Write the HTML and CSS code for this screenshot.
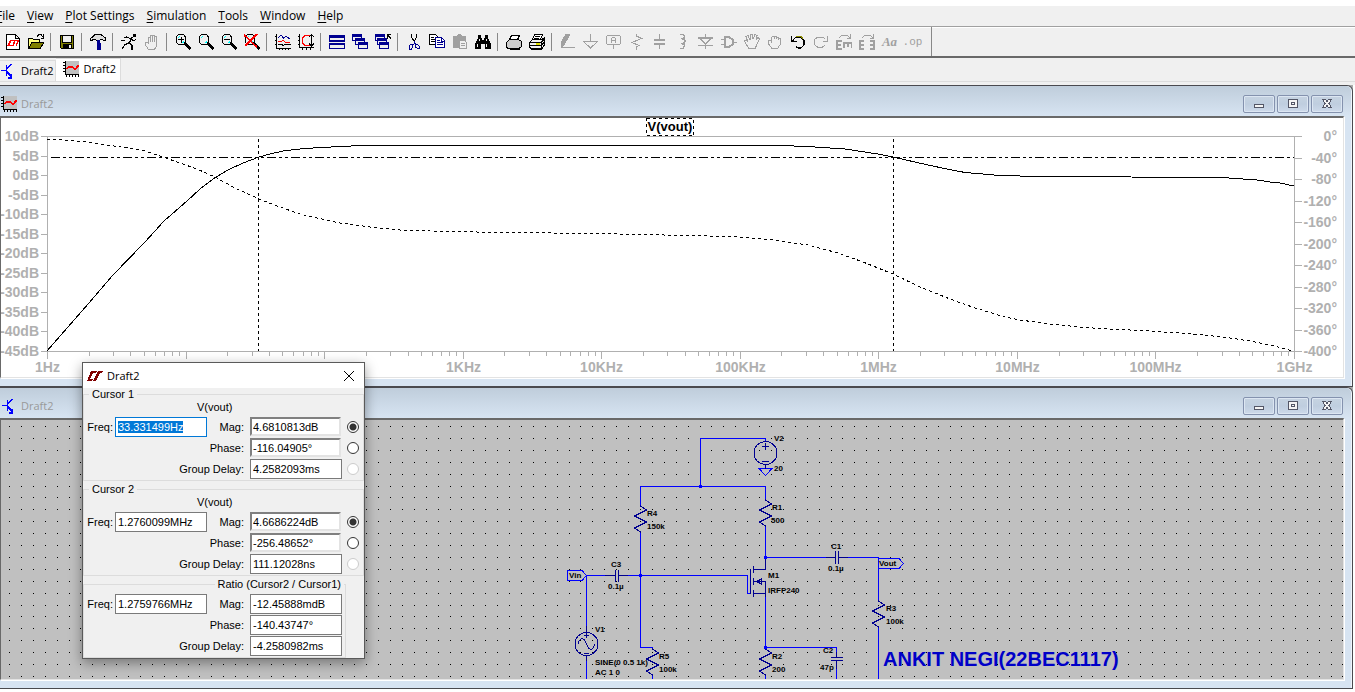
FILE: index.html
```html
<!DOCTYPE html>
<html lang="en">
<head>
<meta charset="utf-8">
<title>Draft2</title>
<link rel="stylesheet" href="styles.css">
</head>
<body>
<svg class="defs" aria-hidden="true">
  <symbol id="i-plot" viewBox="0 0 16 16">
    <rect x="2" width="14" height="13" fill="#c0c0c0"/>
    <path d="M2.500 0v13.500H16M0 1.500h2M0 4.500h2M0 7.500h2M0 10.500h2M3.500 14v2M6.500 14v2M9.500 14v2M12.500 14v2M15.500 14v2" fill="none" stroke="#000"/>
    <path d="M3.500 8L6 5.500H9L11 7.500H13L16 4" fill="none" stroke="#f00" stroke-width="2"/>
  </symbol>
  <symbol id="i-npn" viewBox="0 0 16 16">
    <path d="M1 7.500h5M6.500 2v11M7 6L11.500 1M7 9l5 5M11.500 11v4H8" fill="none" stroke="#00f" stroke-width="1.500"/>
  </symbol>
  <symbol id="resistor" viewBox="-8 0 16 28" overflow="visible">
    <path d="M0 0v1l6 4-12 6 12 6-12 6 6 4v1"/>
  </symbol>
</svg>

<header class="app-head">
  <nav class="menu" aria-label="Main menu">
    <button><u>F</u>ile</button><button><u>V</u>iew</button><button><u>P</u>lot Settings</button><button><u>S</u>imulation</button><button><u>T</u>ools</button><button><u>W</u>indow</button><button><u>H</u>elp</button>
  </nav>
  <div class="toolbar" role="toolbar" aria-label="Tools">
    <button aria-label="New schematic"><svg viewBox="0 0 16 16"><path d="M1.500 .5h9l4 4v11h-13zM10.500 .5v4h4" fill="#fff" stroke="#000"/><path d="M3 11.500L6 6.500h4L8 11.500zM9 6.500h4.500L11 11.500" fill="none" stroke="#f00" stroke-width="1.600"/></svg></button>
    <button aria-label="Open"><svg viewBox="0 0 16 16"><path d="M.5 14V4.500h4l1 1h6V8" fill="#ffff80" stroke="#000"/><path d="M.5 14.500L4 8.500h12L12 14.500z" fill="#808000" stroke="#000"/><path d="M9 2.500L11 .5h2l2 2.500M15.500 0v4h-3" fill="none" stroke="#000"/></svg></button>
    <span class="sep"></span>
    <button aria-label="Save"><svg viewBox="0 0 16 16"><path d="M1.500 1.500h13v13H2.500l-1-1z" fill="#808000" stroke="#000"/><path d="M4 2h8v6H4z" fill="#efefef"/><path d="M3.500 2v6.500h9V2" fill="none" stroke="#000"/><path d="M4 10h9v5H4z" fill="#000"/><path d="M10 11h2v3h-2z" fill="#efefef"/></svg></button>
    <span class="sep"></span>
    <button aria-label="Control panel"><svg viewBox="0 0 16 16"><path d="M.5 6.500v-2L3 2.500 5 .5h6L15.500 4v2.500h-2L12 5l-2 1H6L4 5 2 6.500z" fill="#ddd" stroke="#000"/><path d="M7 6h3v3h1v7H7V9h0z" fill="#000090"/></svg></button>
    <span class="sep"></span>
    <button aria-label="Run"><svg viewBox="0 0 16 16"><path d="M12 0h3v3h-3z" fill="#000"/><path d="M11.500 3L8 9M3 3.500l3-.5 4 2 3 2 2-2M8 9L4 10.500 1 15M8 9l3 2v4.500M0 6.500h4" fill="none" stroke="#000" stroke-width="1.300"/></svg></button>
    <button aria-label="Halt"><svg viewBox="0 0 16 16"><path d="M4.500 15.500L1.500 11V8h2l1 1V3.500h2V8 1.500h2V8 1h2v7-5.500h2V12l-2 3.500z" fill="#efefef" stroke="#a0a0a0"/></svg></button>
    <span class="sep"></span>
    <button aria-label="Zoom in"><svg viewBox="0 0 16 16"><use href="#lens"/><path d="M3 5.500h6M6.500 3v6" stroke="#000"/></svg></button>
    <button aria-label="Pan"><svg viewBox="0 0 16 16"><g id="lens"><path d="M3.500 .5h5l2 2.500v5l-2 2.500h-5L1 8V3z" fill="#efefef" stroke="#000"/><path d="M2.500 4.500L4.500 2.500M7.500 9L9 7.500" stroke="#0ff"/><path d="M10 9.500l5.500 5.500" stroke="#000" stroke-width="2.200"/></g></svg></button>
    <button aria-label="Zoom out"><svg viewBox="0 0 16 16"><use href="#lens"/><path d="M3 5.500h6" stroke="#000"/></svg></button>
    <button aria-label="Zoom to fit"><svg viewBox="0 0 16 16"><use href="#lens"/><path d="M0 1l13 12M13 0L1 12" stroke="#f00" stroke-width="1.600"/></svg></button>
    <span class="sep"></span>
    <button aria-label="Autorange"><svg viewBox="0 0 16 16"><path d="M1.500 0v14.500H16M0 2.500h2M0 6.500h2M0 10.500h2M4.500 14v2M7.500 14v2M10.500 14v2M13.500 14v2M3 10.500h4l1 1 2-1h6" fill="none" stroke="#000"/><path d="M3 4l3-3 2.500 3L11 2l4 3" fill="none" stroke="#000090"/><path d="M3 7.500h3l2-1 3 2h4" fill="none" stroke="#f00"/></svg></button>
    <button aria-label="Plot limits"><svg viewBox="0 0 16 16"><path d="M1.500 0v13.500H16M0 2.500h2M0 6.500h2M0 10.500h2M4.500 13v3M8.500 13v3M12.500 13v3M11 3l2.500-2.500L16 3M13.500 1v11M11 9.500l2.500 2.500L16 9.500" fill="none" stroke="#000"/><path d="M12 1.500H7L4.500 4v5L7 11.500h5" fill="none" stroke="#f00"/></svg></button>
    <span class="sep"></span>
    <button aria-label="Tile"><svg viewBox="0 0 16 16"><path d="M.5 1.500h15v5H.5zM.5 9.500h15v5H.5z" fill="#efefef" stroke="#000090"/><path d="M0 1h16v3H0zM0 9h16v2H0zM0 7h16v1H0z" fill="#000090"/></svg></button>
    <button aria-label="Cascade"><svg viewBox="0 0 16 16"><g id="win"><path d="M.5 1.500h9v5h-9z" fill="#efefef" stroke="#000090"/><path d="M0 0h10v3H0z" fill="#000090"/></g><use href="#win" x="3" y="4"/><use href="#win" x="6" y="8"/></svg></button>
    <button aria-label="Close all"><svg viewBox="0 0 16 16"><use href="#win"/><use href="#win" x="2" y="4"/><use href="#win" x="4" y="8"/><path d="M12.500 5V.5H16M12.500 1L16 4.500" stroke="#000" fill="none"/></svg></button>
    <span class="sep"></span>
    <button aria-label="Cut"><svg viewBox="0 0 16 16"><path d="M5.500 0v3l3 5M10.500 0v3L8 8" fill="none" stroke="#000" stroke-width="1.200"/><path d="M8 7v3l-2 1M8 9l2 1.500M3.500 11.500l1-1h2v3l-1 1.500h-2zM9.500 10.500h2l1.500 1.500v2h-2l-1.500-1z" fill="none" stroke="#000090"/></svg></button>
    <button aria-label="Copy"><svg viewBox="0 0 16 16"><path d="M.5 .5h6l2 2v8h-8z" fill="#fff" stroke="#000"/><path d="M2 3.500h3M2 5.500h5M2 7.500h5" stroke="#000"/><path d="M6.500 3.500h6l3 3v7h-9z" fill="#fff" stroke="#000090"/><path d="M8 6.500h3M8 8.500h6M8 10.500h6M12.500 4v3h3" stroke="#000090" fill="none"/></svg></button>
    <button aria-label="Paste"><svg viewBox="0 0 16 16"><path d="M1 2h4l1-2h3l1 2h4v12H1z" fill="#a0a0a0"/><path d="M7.500 6.500h5l2 2v6h-7z" fill="#efefef" stroke="#a0a0a0"/><path d="M9 9.500h4M9 11.500h4M4 3.500h7" stroke="#a0a0a0"/></svg></button>
    <button aria-label="Find"><svg viewBox="0 0 16 16"><path d="M3 1h3v3h1v2h2V4h1V1h3v3l3 6v5h-6v-5H6v5H0v-5l3-6z" fill="#000"/><path d="M2.500 10v3M4.500 5v2M11.500 5v2M11.500 10v3" stroke="#efefef"/></svg></button>
    <span class="sep"></span>
    <button aria-label="Print setup"><svg viewBox="0 0 16 16"><path d="M3.500 5.500l2-4h8l-2 4" fill="#fff" stroke="#000"/><path d="M.5 8.500l3-3h9l3 2v5l-2 1.500h-12l-1-1z" fill="#ccc" stroke="#000"/><path d="M4 14h10v2H4z" fill="#000"/></svg></button>
    <button aria-label="Print"><svg viewBox="0 0 16 16"><path d="M3.500 5.500l2-5h8l-2 5" fill="#fff" stroke="#000"/><path d="M6 2.500h5M5 4.500h5M.5 8.500l3-3h9l3-1.500v7l-3 4h-10l-2-2zM1 8.500h11l3-3M1 11.500h11l3-3M12.500 9v6" fill="#efefef" stroke="#000" stroke-width="1.300"/><path d="M7 10h4" stroke="#dd0" stroke-width="2"/></svg></button>
    <span class="sep"></span>
    <button aria-label="Wire"><svg viewBox="0 0 16 16" class="off"><path d="M6 0h3v2L4 11l-3 3V9z" fill="#a0a0a0"/><path d="M1 13.500h14"/></svg></button>
    <button aria-label="Ground"><svg viewBox="0 0 16 16" class="off"><path d="M7.500 0v7M0 7.500h15M1 8l6.500 6L14 8"/></svg></button>
    <button aria-label="Label net"><svg viewBox="0 0 16 16" class="off"><path d="M1.500 1.500h12l1 1v7l-1 1h-12l-1-1v-7zM7.500 11v4M5.500 9V5l1-1.500h2l1 1.500v4M5 6.500h5"/></svg></button>
    <button aria-label="Resistor"><svg viewBox="0 0 16 16" class="off"><path d="M7.500 0v2L12.500 4.500 3 8.500l7 3-2.500 1.500v3"/></svg></button>
    <button aria-label="Capacitor"><svg viewBox="0 0 16 16" class="off"><path d="M7.500 0v6M7.500 10v5"/><path d="M2 6h11M2 10h11" stroke-width="2"/></svg></button>
    <button aria-label="Inductor"><svg viewBox="0 0 16 16" class="off"><path d="M5 .5h3l1.500 2L8 4.500H6M7 5h2l1 2-1.500 2.500H6M7 10h2l.5 2L8 14.500H5" stroke-width="1.500"/></svg></button>
    <button aria-label="Diode"><svg viewBox="0 0 16 16" class="off"><path d="M7.500 0v4M0 4h15M2.500 5l5 5 5-5M0 11.500h15M7.500 11v4" stroke-width="1.500"/></svg></button>
    <button aria-label="Component"><svg viewBox="0 0 16 16" class="off"><path d="M0 5.500h4M0 10.500h4M12 8h4"/><path d="M4 3h4l4 3v4l-4 3H4z" stroke-width="2"/></svg></button>
    <button aria-label="Move"><svg viewBox="0 0 16 16" class="off"><path d="M5 14.500L1.500 9.500l-1-3 2-.5L4 8 2 2.500l2-1L6 6V.5h2L9 5l2-4.500 2 1L12 6l2-2.500 1.500 1.500-2.500 5-2 5z"/></svg></button>
    <button aria-label="Drag"><svg viewBox="0 0 16 16" class="off"><path d="M5 14.500L1.500 10V6.500h2L4.500 8V3.500l1-1h1.500V5 2.500h2V5l.5-2h2V6l.5-1.500h1.500V10l-3 4.500z"/></svg></button>
    <button aria-label="Undo"><svg viewBox="0 0 16 16"><path d="M3 6l3-3h4l4 3v5l-3 3H8l-2-1.500" fill="none" stroke="#000" stroke-width="1.200"/><path d="M1.500 2v5.500h5M2 6l2 1" fill="none" stroke="#000"/><path d="M6 2.500h5l2 2" fill="none" stroke="#880"/></svg></button>
    <button aria-label="Redo"><svg viewBox="0 0 16 16" class="off"><path d="M12 5l-2-2H5L1.500 5.500v5L5 13.500h4l3-2.500M14.500 2v5.500h-5"/></svg></button>
    <button aria-label="Rotate"><svg viewBox="0 0 16 16" class="off"><path d="M3 4l3-3h5l3 3M14.500 0v4H11"/><path d="M6 7H1v8h5M1 11h4M8 14V9h8v5M12 9v4" stroke-width="1.800"/></svg></button>
    <button aria-label="Mirror"><svg viewBox="0 0 16 16" class="off"><path d="M3 4l3-3h5l3 3M14.500 0v4H11"/><path d="M5 7H1v8h4M1 11h4M11 7h4v8h-4M15 11h-4" stroke-width="1.800"/></svg></button>
    <button aria-label="Text" class="glyph">Aa</button>
    <button aria-label="SPICE directive" class="glyph op">.op</button>
    <span class="grip"></span>
  </div>
  <div class="tabs" role="tablist">
    <button class="tab" role="tab"><svg><use href="#i-npn"/></svg>Draft2</button>
    <button class="tab on" role="tab" aria-selected="true"><svg><use href="#i-plot"/></svg>Draft2</button>
  </div>
</header>

<main class="mdi">
  <section class="win">
    <div class="title"><svg class="ticon"><use href="#i-plot"/></svg><h2>Draft2</h2>
      <div class="ctl">
        <button aria-label="Minimize"><svg viewBox="0 0 12 12"><path d="M1.500 6.500h9v3h-9z"/></svg></button>
        <button aria-label="Restore"><svg viewBox="0 0 12 12"><path d="M1.500 1.500h9v8h-9zM4.500 4.500h3v2h-3z"/></svg></button>
        <button aria-label="Close"><svg viewBox="0 0 12 12"><path d="M1.500 1.500h3L6 4l1.500-2.500h3L8 5.500l2.500 4h-3L6 7.500 4.500 9.500h-3l2.500-4z"/></svg></button>
      </div>
    </div>
    <div class="view">
      <svg class="plot" viewBox="1 118 1342 259" role="img" aria-label="V(vout) magnitude and phase">
        <g id="axes"></g>
        <path class="trace cur" d="M50.500 157.500H1294"/>
        <path class="trace dash" d="M258.500 139V351M893.500 139V351"/>
        <polyline class="trace" points="47,351 89,303 113,275 145,242 164,221 187,201 200,189 213,179 228,170 243,163 259,157 270,154 283,151 300,149 313,148 340,146.500 362,145.500 783,145.500 815,147 845,149 878,154 893,157 928,165 947,169 965,172.500 1000,175.500 1040,176.500 1222,177.500 1243,179 1257,180 1270,182 1280,183 1294,186"/>
        <polyline class="trace dash" points="47,139 63,140 87,142 107,145 128,148 145,151 163,157 180,163 197,169 217,178 233,187 259,199 280,207 300,214 317,218 340,223 370,227 400,230 430,231 500,232.500 600,233.500 637,234.500 690,235.500 740,237 773,240 808,245 838,253 863,262 893,274 920,287 950,299 975,308 1005,317 1020,320 1050,324 1080,327 1100,328.500 1150,331 1193,334 1223,337 1250,341 1270,345 1293,351"/>
        <rect class="trace dash" x="646.500" y="118.500" width="47" height="17"/>
        <text class="tname" x="670" y="131">V(vout)</text>
      </svg>
    </div>
  </section>

  <section class="win">
    <div class="title"><svg class="ticon"><use href="#i-npn"/></svg><h2>Draft2</h2>
      <div class="ctl">
        <button aria-label="Minimize"><svg viewBox="0 0 12 12"><path d="M1.500 6.500h9v3h-9z"/></svg></button>
        <button aria-label="Restore"><svg viewBox="0 0 12 12"><path d="M1.500 1.500h9v8h-9zM4.500 4.500h3v2h-3z"/></svg></button>
        <button aria-label="Close"><svg viewBox="0 0 12 12"><path d="M1.500 1.500h3L6 4l1.500-2.500h3L8 5.500l2.500 4h-3L6 7.500 4.500 9.500h-3l2.500-4z"/></svg></button>
      </div>
    </div>
    <div class="view">
      <svg class="sch" viewBox="1 420 1342 259" role="img" aria-label="Amplifier schematic">
        <path id="grid" fill="#000"/>
        <g class="wire">
          <path d="M765.500 441v-2.500h-65v48M640.500 505v-18.500h125V500M640.500 532v115.500h12v2M765.500 526v32M765.500 557.500h62M847 557.500h31.500V600M878.500 627v52M765.500 596v53M765.500 647.500h71v5M836.500 669v10M586.500 575.500h19M628 575.500h119.500v18h3M586.500 575.500V626M586.500 660v19M765.500 675v4M652.500 675v4"/>
          <path d="M567.500 570.500H582l4.500 5-4.500 5h-14.500zM878.500 558.500H899l4.500 5-4.500 5h-20.500zM759 468.500h13l-6.500 7z"/>
        </g>
        <g class="part">
          <use href="#resistor" x="632.500" y="505" width="16" height="28"/>
          <use href="#resistor" x="757.500" y="499" width="16" height="28"/>
          <use href="#resistor" x="757.500" y="648" width="16" height="28"/>
          <use href="#resistor" x="644.500" y="648" width="16" height="28"/>
          <use href="#resistor" x="870.500" y="600" width="16" height="28"/>
          <circle cx="765.500" cy="453" r="11.500"/><circle cx="586.500" cy="644" r="11.500"/>
          <path d="M762 446.500h7M765.500 443v7M762 461.500h7M765.500 465v4M584 635.500h5M586.500 626v12M584 653.500h5M586.500 655v6M578 644c2-7 6-7 8.500 0s6 7 8.500 0"/>
          <path d="M605 575.500h10.500M618.500 575.500H628M615.500 570v12M618.500 570v12M826 557.500h9.500M838.500 557.500h9M835.500 551v13M838.500 551v13M831 657.500h12M831 660.500h12M836.500 652v5.500M836.500 660.500V669"/>
          <path d="M750.500 569v25M753.500 566v7M753.500 578v7M753.500 590v7M753.500 569.500h12V558M753.500 593.500h12M753.500 581.500h12V597M761.500 579v5l-5-2.500z"/>
        </g>
        <path fill="#00f" d="M699 485h3v3h-3zM764 556h3v3h-3zM764 646h3v3h-3zM639 574h3v3h-3z"/>
        <g class="lbl">
          <text x="774" y="441">V2</text><text x="774" y="471">20</text>
          <text x="772" y="510">R1</text><text x="771" y="523">500</text>
          <text x="647" y="516">R4</text><text x="647" y="529">150k</text>
          <text x="611" y="567">C3</text><text x="608" y="589">0.1µ</text>
          <text x="768" y="578">M1</text><text x="768" y="593">IRFP240</text>
          <text x="595" y="632">V1</text><text x="595" y="665">SINE(0 0.5 1k)</text><text x="595" y="675">AC 1 0</text>
          <text x="659" y="659">R5</text><text x="659" y="672">100k</text>
          <text x="772" y="659">R2</text><text x="772" y="672">200</text>
          <text x="831" y="549">C1</text><text x="828" y="571">0.1µ</text>
          <text x="823" y="653">C2</text><text x="820" y="670">47p</text>
          <text x="886" y="611">R3</text><text x="886" y="624">100k</text>
          <text x="569" y="578">Vin</text><text x="879" y="566">Vout</text>
        </g>
        <text class="note" x="883" y="666">ANKIT NEGI(22BEC1117)</text>
      </svg>
    </div>
  </section>
</main>

<form class="dialog" role="dialog" aria-label="Draft2">
  <div class="dtitle">
    <svg viewBox="0 0 16 12"><path d="M4 1h6L9 3H6l-3 6h3l-1 2H0zM11 1h5l-1 2h-2L9 11H6z" fill="#800000"/></svg>
    <h3>Draft2</h3>
    <button type="button" aria-label="Close"><svg viewBox="0 0 10 10"><path d="M0 0l10 10M10 0L0 10" stroke="#000" fill="none"/></svg></button>
  </div>
  <fieldset>
    <legend>Cursor 1</legend>
    <p>V(vout)</p>
    <div class="grid">
      <label for="f1">Freq:</label><input id="f1" value="33.331499Hz">
      <label for="m1">Mag:</label><input id="m1" class="sunk" value="4.6810813dB"><input type="radio" name="c1" aria-label="Magnitude 1" checked>
      <label class="wide" for="p1">Phase:</label><input id="p1" class="sunk" value="-116.04905°"><input type="radio" name="c1" aria-label="Phase 1">
      <label class="wide" for="g1">Group Delay:</label><input id="g1" value="4.2582093ms"><input type="radio" name="c1" aria-label="Group delay 1" disabled>
    </div>
  </fieldset>
  <fieldset>
    <legend>Cursor 2</legend>
    <p>V(vout)</p>
    <div class="grid">
      <label for="f2">Freq:</label><input id="f2" value="1.2760099MHz">
      <label for="m2">Mag:</label><input id="m2" class="sunk" value="4.6686224dB"><input type="radio" name="c2" aria-label="Magnitude 2" checked>
      <label class="wide" for="p2">Phase:</label><input id="p2" class="sunk" value="-256.48652°"><input type="radio" name="c2" aria-label="Phase 2">
      <label class="wide" for="g2">Group Delay:</label><input id="g2" value="111.12028ns"><input type="radio" name="c2" aria-label="Group delay 2" disabled>
    </div>
  </fieldset>
  <fieldset class="ratio">
    <legend>Ratio (Cursor2 / Cursor1)</legend>
    <div class="grid">
      <label for="f3">Freq:</label><input id="f3" value="1.2759766MHz">
      <label for="m3">Mag:</label><input id="m3" value="-12.45888mdB"><span></span>
      <label class="wide" for="p3">Phase:</label><input id="p3" value="-140.43747°"><span></span>
      <label class="wide" for="g3">Group Delay:</label><input id="g3" value="-4.2580982ms"><span></span>
    </div>
  </fieldset>
</form>
<script src="app.js"></script>
</body>
</html>
```
FILE: styles.css
```css
* { box-sizing: border-box; }
body { margin: 0; padding-top: 6px; background: #fff; color: #000; font: 12px/16px "Open Sans", sans-serif; }
button { font: inherit; color: inherit; background: none; border: 0; padding: 0; margin: 0; }
h2, h3, p { margin: 0; font: inherit; }
svg { display: block; shape-rendering: crispEdges; }
.defs { position: absolute; width: 0; height: 0; }

.app-head { background: #f0f0f0; overflow: hidden; }
.menu { display: flex; height: 20px; align-items: center; margin-left: -10px; }
.menu button { padding: 0 6px; white-space: nowrap; }
.menu u { text-underline-offset: 2px; }

.toolbar { display: flex; align-items: center; height: 32px; padding-left: 1px; border-top: 1px solid #a0a0a0; border-bottom: 2px solid #696969; box-shadow: inset 0 1px #fff; }
.toolbar button { width: 23px; height: 22px; display: grid; place-items: center; flex: none; }
.toolbar button svg { width: 16px; height: 16px; }
.off { fill: none; stroke: #a0a0a0; }
.sep { flex: none; width: 8px; height: 18px; background: linear-gradient(#888, #888) 3px 0 / 1px 100% no-repeat; }
.toolbar .glyph { font: italic bold 13px/16px "Liberation Serif", serif; color: #a0a0a0; }
.toolbar .glyph.op { font: 11px/14px "Liberation Mono", monospace; }
.grip { align-self: stretch; width: 8px; border-right: 1px solid #888; }

.tabs { display: flex; align-items: flex-end; height: 24px; border-bottom: 1px solid #dcdcdc; }
.tab { display: flex; align-items: center; gap: 5px; height: 21px; padding-right: 1px; border-top: 1px solid #dcdcdc; border-right: 1px solid #dcdcdc; font-size: 11px; }
.tab svg { width: 16px; height: 16px; }
.tab.on { height: 23px; padding: 0 4px 2px 7px; background: #fff; }

.mdi { background: linear-gradient(to right, #ababab calc(100% - 2px), #fff 0); }
.mdi::before { content: ""; display: block; height: 3px; background: #f0f0f0; }
.win { margin-right: 2px; padding: 0 8px 8px 0; border: solid #4a4a4f; border-width: 1px 1px 1px 0; border-radius: 0 6px 0 0; background: #d7e4f2; box-shadow: inset -1px 1px #eef4fa; }
.title { display: flex; align-items: center; height: 30px; margin-right: -7px; padding: 6px 8px 0 1px; background: linear-gradient(#bfcddb, #d7e4f2); border-radius: 0 5px 0 0; color: #999; }
.ticon { width: 16px; height: 16px; margin-right: 4px; }
.title h2 { font-size: 11px; }
.ctl { display: flex; gap: 2px; margin-left: auto; }
.ctl button { width: 32px; height: 18px; border: 1px solid #8492ae; border-radius: 2px; background: linear-gradient(#c6d3e1, #bfcedf 50%, #cddaea); box-shadow: inset 0 0 0 1px #dce6f2; display: grid; place-items: center; }
.ctl svg { width: 12px; height: 12px; fill: #f4f4f4; stroke: #535666; }
.view { border: solid; border-width: 2px 1px 1px 1px; border-color: #696969 #e3e3e3 #e3e3e3 #696969; box-shadow: 1px 1px #fff; }
.view svg { width: 100%; height: auto; }
.plot { background: #fff; }
.axis { fill: none; stroke: #b0b0b0; }
.tick { font: bold 14px "Liberation Sans", sans-serif; fill: #b0b0b0; }
.end { text-anchor: end; }
.mid, .tname { text-anchor: middle; }
.tname { font: bold 13px "Liberation Sans", sans-serif; }
.trace { fill: none; stroke: #000; }
.dash { stroke-dasharray: 3 3; }
.cur { stroke-dasharray: 9 3 3 3 3 3; }
.sch { background: #c0c0c0; }
.wire { fill: none; stroke: #00f; }
.part { fill: none; stroke: #000090; }
.lbl { font: bold 8px "Liberation Sans", sans-serif; }
.note { font: bold 20px "Liberation Sans", sans-serif; fill: #0000c8; }

.dialog { position: absolute; left: 82px; top: 362px; width: 283px; border: 1px solid #5a5a5a; background: #f0f0f0; box-shadow: 0 4px 12px rgba(0, 0, 0, .4); font: 11px/13px "Liberation Sans", sans-serif; }
.dtitle { display: flex; align-items: center; height: 25px; padding: 0 10px 0 4px; background: #fff; font: 11px/16px "Open Sans", sans-serif; }
.dtitle > svg { width: 16px; height: 12px; margin-right: 4px; }
.dtitle button { margin-left: auto; }
.dtitle button svg { width: 10px; height: 10px; shape-rendering: auto; }
fieldset { margin: 0 0 2px; padding: 0 0 0 3px; border: 1px solid #dcdcdc; }
legend { margin-left: 2px; padding: 0 3px; }
fieldset p { height: 16px; line-height: 12px; padding-left: 110px; }
.ratio { margin: 0 18px 0 0; }
.ratio legend { margin: 0 1px 0 auto; }
.ratio .grid { padding-top: 3px; }
.grid { display: grid; grid-template-columns: 28px 92px 43px 92px 1fr; grid-auto-rows: 21px; align-items: start; }
.grid label { text-align: right; padding-right: 6px; line-height: 20px; }
.grid label:first-child { padding-right: 2px; }
.grid .wide { grid-column: 1 / 4; }
.grid input:not([type]) { width: 92px; height: 20px; padding: 0 2px; border: 1px solid #7a7a7a; background: #fff; font: inherit; outline: 0; }
.grid input.sunk:not([type]) { width: 91px; height: 19px; border: 2px solid; border-color: #808080 #e3e3e3 #e3e3e3 #808080; padding: 0 1px; }
.grid input:not([type]):focus { border-color: #0078d7; }
input::selection { background: #0078d7; color: #fff; }
input[type=radio] { appearance: none; width: 12px; height: 12px; margin: 4px 0 0; justify-self: center; border: 1px solid #333; border-radius: 50%; background: #fff; }
input[type=radio]:checked { background: radial-gradient(#333 3px, #fff 4px); }
input[type=radio]:disabled { border-color: #ccc; }
```
FILE: app.js
```js
const LEFT = 47.5, RIGHT = 1294.5, TOP = 136.5, BOTTOM = 351.5;
const snap = v => Math.floor(v) + 0.5;
const labels = [];
let d = `M${LEFT - 7} ${TOP}H${RIGHT + 7}M${LEFT - 7} ${BOTTOM}H${RIGHT + 7}M${LEFT} ${TOP}V${BOTTOM + 7}M${RIGHT} ${TOP}V${BOTTOM + 7}`;

const text = (cls, x, y, s) => labels.push(`<text class="tick ${cls}" x="${x}" y="${y}">${s}</text>`);

for (let i = 0; i <= 11; i++) {
  const y = snap(TOP + (BOTTOM - TOP) * i / 11);
  d += `M${LEFT - 7} ${y}H${LEFT}`;
  text('end', 39, y + 4.5, `${10 - 5 * i}dB`);
}
for (let i = 0; i <= 10; i++) {
  const y = snap(TOP + (BOTTOM - TOP) * i / 10);
  d += `M${RIGHT} ${y}h7`;
  text('end', 1337, y + 4.5, `${i ? -40 * i : 0}°`);
}
const names = ['1Hz', '10Hz', '100Hz', '1KHz', '10KHz', '100KHz', '1MHz', '10MHz', '100MHz', '1GHz'];
const decade = (RIGHT - LEFT) / 9;
names.forEach((name, i) => {
  const x = LEFT + decade * i;
  d += `M${snap(x)} ${BOTTOM}v7`;
  text('mid', snap(x), 372, name);
  if (i < 9) for (let k = 2; k < 10; k++) d += `M${snap(x + decade * Math.log10(k))} ${BOTTOM}v4`;
});
document.getElementById('axes').innerHTML = `<path class="axis" d="${d}"/>${labels.join('')}`;

let dots = '';
const PITCH = 11.906;
for (let y = 426; y < 679; y += PITCH)
  for (let x = 9; x < 1343; x += PITCH)
    dots += `M${Math.round(x)} ${Math.round(y)}h1v1h-1z`;
document.getElementById('grid').setAttribute('d', dots);

document.getElementById('f1').select();
```
